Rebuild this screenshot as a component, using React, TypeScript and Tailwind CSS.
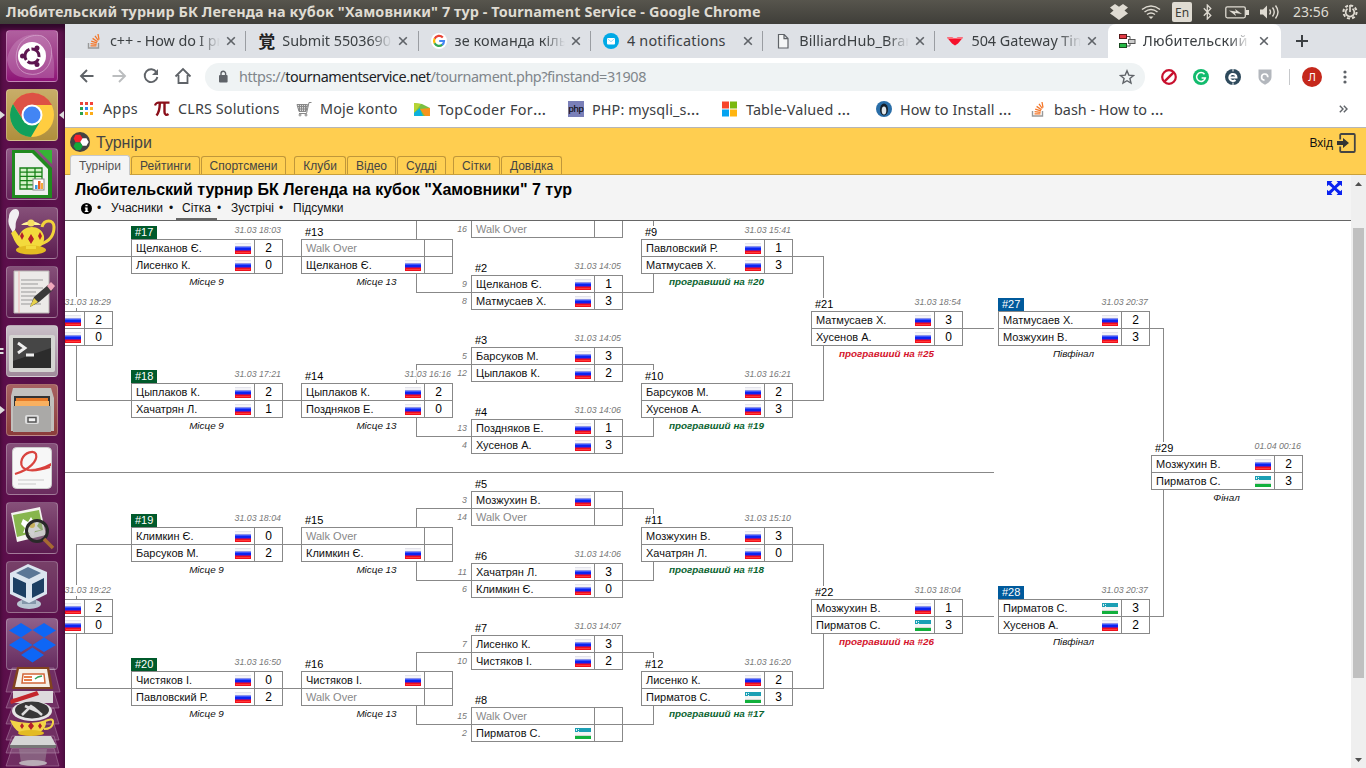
import type { ReactNode } from 'react';

type Flag = 'ru' | 'uz' | '';
type Player = [name: string, flag: Flag, score: string];
type Match = {
  x: number;
  y: number;
  id: string;
  date?: string;
  tone?: 'green' | 'blue';
  note?: string;
  noteTone?: 'green' | 'red';
  seeds?: [string, string];
  a: Player;
  b: Player;
};

const WO: Player = ['Walk Over', '', ''];

/* Node coordinates are relative to the canvas corner. */
const matches: Match[] = [
  { x: -104, y: 90, id: '', date: '31.03 18:29', a: ['', 'ru', '2'], b: ['', 'ru', '0'] },
  { x: -104, y: 378, id: '', date: '31.03 19:22', a: ['', 'ru', '2'], b: ['', 'ru', '0'] },
  { x: 66, y: 18, id: '#17', date: '31.03 18:03', tone: 'green', note: 'Місце 9', a: ['Щелканов Є.', 'ru', '2'], b: ['Лисенко К.', 'ru', '0'] },
  { x: 66, y: 162, id: '#18', date: '31.03 17:21', tone: 'green', note: 'Місце 9', a: ['Цыплаков К.', 'ru', '2'], b: ['Хачатрян Л.', 'ru', '1'] },
  { x: 66, y: 306, id: '#19', date: '31.03 18:04', tone: 'green', note: 'Місце 9', a: ['Климкин Є.', 'ru', '0'], b: ['Барсуков М.', 'ru', '2'] },
  { x: 66, y: 450, id: '#20', date: '31.03 16:50', tone: 'green', note: 'Місце 9', a: ['Чистяков І.', 'ru', '0'], b: ['Павловский Р.', 'ru', '2'] },
  { x: 236, y: 18, id: '#13', note: 'Місце 13', a: WO, b: ['Щелканов Є.', 'ru', ''] },
  { x: 236, y: 162, id: '#14', date: '31.03 16:16', note: 'Місце 13', a: ['Цыплаков К.', 'ru', '2'], b: ['Поздняков Е.', 'ru', '0'] },
  { x: 236, y: 306, id: '#15', note: 'Місце 13', a: WO, b: ['Климкин Є.', 'ru', ''] },
  { x: 236, y: 450, id: '#16', note: 'Місце 13', a: ['Чистяков І.', 'ru', ''], b: WO },
  { x: 406, y: -18, id: '', seeds: ['', '16'], a: ['', '', ''], b: WO },
  { x: 406, y: 54, id: '#2', date: '31.03 14:05', seeds: ['9', '8'], a: ['Щелканов Є.', 'ru', '1'], b: ['Матмусаев Х.', 'ru', '3'] },
  { x: 406, y: 126, id: '#3', date: '31.03 14:05', seeds: ['5', '12'], a: ['Барсуков М.', 'ru', '3'], b: ['Цыплаков К.', 'ru', '2'] },
  { x: 406, y: 198, id: '#4', date: '31.03 14:06', seeds: ['13', '4'], a: ['Поздняков Е.', 'ru', '1'], b: ['Хусенов А.', 'ru', '3'] },
  { x: 406, y: 270, id: '#5', seeds: ['3', '14'], a: ['Мозжухин В.', 'ru', ''], b: WO },
  { x: 406, y: 342, id: '#6', date: '31.03 14:06', seeds: ['11', '6'], a: ['Хачатрян Л.', 'ru', '3'], b: ['Климкин Є.', 'ru', '0'] },
  { x: 406, y: 414, id: '#7', date: '31.03 14:07', seeds: ['7', '10'], a: ['Лисенко К.', 'ru', '3'], b: ['Чистяков І.', 'ru', '2'] },
  { x: 406, y: 486, id: '#8', seeds: ['15', '2'], a: WO, b: ['Пирматов С.', 'uz', ''] },
  { x: 576, y: 18, id: '#9', date: '31.03 15:41', note: 'програвший на #20', noteTone: 'green', a: ['Павловский Р.', 'ru', '1'], b: ['Матмусаев Х.', 'ru', '3'] },
  { x: 576, y: 162, id: '#10', date: '31.03 16:21', note: 'програвший на #19', noteTone: 'green', a: ['Барсуков М.', 'ru', '2'], b: ['Хусенов А.', 'ru', '3'] },
  { x: 576, y: 306, id: '#11', date: '31.03 15:10', note: 'програвший на #18', noteTone: 'green', a: ['Мозжухин В.', 'ru', '3'], b: ['Хачатрян Л.', 'ru', '0'] },
  { x: 576, y: 450, id: '#12', date: '31.03 16:20', note: 'програвший на #17', noteTone: 'green', a: ['Лисенко К.', 'ru', '2'], b: ['Пирматов С.', 'uz', '3'] },
  { x: 746, y: 90, id: '#21', date: '31.03 18:54', note: 'програвший на #25', noteTone: 'red', a: ['Матмусаев Х.', 'ru', '3'], b: ['Хусенов А.', 'ru', '0'] },
  { x: 746, y: 378, id: '#22', date: '31.03 18:04', note: 'програвший на #26', noteTone: 'red', a: ['Мозжухин В.', 'ru', '1'], b: ['Пирматов С.', 'uz', '3'] },
  { x: 933, y: 90, id: '#27', date: '31.03 20:37', tone: 'blue', note: 'Півфінал', a: ['Матмусаев Х.', 'ru', '2'], b: ['Мозжухин В.', 'ru', '3'] },
  { x: 933, y: 378, id: '#28', date: '31.03 20:37', tone: 'blue', note: 'Півфінал', a: ['Пирматов С.', 'uz', '3'], b: ['Хусенов А.', 'ru', '2'] },
  { x: 1086, y: 234, id: '#29', date: '01.04 00:16', note: 'Фінал', a: ['Мозжухин В.', 'ru', '2'], b: ['Пирматов С.', 'uz', '3'] },
];

function FlagIcon({ kind }: { kind: Flag }) {
  if (kind === 'ru')
    return (
      <svg width="16" height="11" viewBox="0 0 16 11" shapeRendering="crispEdges" className="block shrink-0">
        <rect width="16" height="4" fill="#f3f3f8" />
        <rect width="16" height="1" fill="#e4e4ec" />
        <rect y="3" width="16" height="5" fill="#0c24f0" />
        <rect y="3" width="16" height="1" fill="#8c93ea" />
        <rect y="4" width="16" height="1" fill="#3b55ff" />
        <rect y="7" width="16" height="4" fill="#f0101c" />
        <rect y="7" width="16" height="1" fill="#8a1090" />
        <rect x="1" y="9" width="14" height="1" fill="#ff3a3a" />
      </svg>
    );
  if (kind === 'uz')
    return (
      <svg width="16" height="11" viewBox="0 0 16 11" shapeRendering="crispEdges" className="block shrink-0">
        <rect width="16" height="11" fill="#f4f4f4" />
        <rect width="16" height="4" fill="#1b9fb4" />
        <rect x="1" y="1" width="1" height="2" fill="#d9f0f4" />
        <rect x="3" y="1" width="1" height="1" fill="#d9f0f4" />
        <rect x="3" y="3" width="1" height="1" fill="#d9f0f4" />
        <rect y="8" width="16" height="3" fill="#11b03c" />
        <rect y="7" width="16" height="1" fill="#d5d9d5" />
      </svg>
    );
  return null;
}

function PlayerRow({ p, last }: { p: Player; last?: boolean }) {
  return (
    <div className={last ? 'flex h-4' : 'flex h-[17px] border-b border-[#888]'}>
      <div className="flex w-[123px] items-center justify-between border-r border-[#888] pl-1 pr-[3px]">
        <span className={p[0] === 'Walk Over' ? 'text-[#888]' : 'text-[#111]'}>{p[0]}</span>
        <span className="pt-px"><FlagIcon kind={p[1]} /></span>
      </div>
      <div className="flex flex-1 items-center justify-center text-[12px]">{p[2]}</div>
    </div>
  );
}

function MatchNode({ m }: { m: Match }) {
  const tone =
    m.tone === 'green' ? 'bg-[#005a2b] text-white' : m.tone === 'blue' ? 'bg-[#005a9c] text-white' : 'bg-white';
  const note =
    m.noteTone === 'green' ? 'font-bold text-[#0a6430]' : m.noteTone === 'red' ? 'font-bold text-[#d4142c]' : 'text-[#111]';
  return (
    <div className="absolute w-[152px] whitespace-nowrap text-[11px] leading-[12px]" style={{ left: m.x, top: m.y - 13 }}>
      <div className="flex h-[13px] items-start justify-between">
        <div className={`h-[13px] px-1 ${tone}`}>{m.id}</div>
        {m.date && (
          <div className="h-[10px] bg-white/80 pr-[2px] text-[8.8px] italic leading-[9px] text-[#777]">{m.date}</div>
        )}
      </div>
      <div className="h-[35px] border border-[#888] bg-white">
        <PlayerRow p={m.a} />
        <PlayerRow p={m.b} last />
      </div>
      <div className={`pr-px pt-px text-center text-[9.9px] italic leading-[13px] ${note}`}>{m.note}</div>
      {m.seeds && (
        <div className="absolute right-[156px] top-[14px] text-right text-[8.8px] italic leading-[17px] text-[#777]">
          <div className="h-[17px]">{m.seeds[0]}</div>
          <div className="h-[17px]">{m.seeds[1]}</div>
        </div>
      )}
    </div>
  );
}

const connectors = [
  'M66 35.5H11.5V76M11.5 87V90M11.5 125V179.5H66',
  'M66 323.5H11.5V364M11.5 375V378M11.5 413V467.5H66',
  'M218 35.5H236M218 179.5H236M218 323.5H236M218 467.5H236',
  'M351.5 0V18M351.5 53V71.5H406',
  'M406 143.5H351.5V162M351.5 197V215.5H406',
  'M406 287.5H351.5V306M351.5 341V359.5H406',
  'M406 431.5H351.5V450M351.5 485V503.5H406',
  'M588.5 0V5M558 71.5H588.5V53',
  'M558 143.5H588.5V149M558 215.5H588.5V197',
  'M558 287.5H588.5V293M558 359.5H588.5V341',
  'M558 431.5H588.5V437M558 503.5H588.5V485',
  'M728 35.5H758.5V77M728 179.5H758.5V125',
  'M728 323.5H758.5V365M728 467.5H758.5V413',
  'M898 107.5H929M898 395.5H929M0 251.5H929',
  'M1085 107.5H1098.5V221M1085 395.5H1098.5V269',
];

function StackIcon() {
  return (
    <svg width="16" height="16" viewBox="0 0 16 16" fill="none">
      <path d="M2.5 10v5h10v-5" stroke="#999" strokeWidth="1.4" />
      <path d="M4.5 12.8h6M4.6 10.6l6 .7M5.2 8.1l5.7 1.8M6.6 5.4l4.9 3.3M9 2.8l3.3 4.7M12 1l1 5.6" stroke="#f4772a" strokeWidth="1.3" />
    </svg>
  );
}

function GoogleG() {
  return (
    <svg width="16" height="16" viewBox="0 0 16 16" fill="none">
      <circle cx="8" cy="8" r="8" fill="#fff" />
      <path d="M11.8 4.4A5 5 0 0 0 3.6 5.8" stroke="#ea4335" strokeWidth="2.2" />
      <path d="M3.7 5.6a5 5 0 0 0 0 4.8" stroke="#fbbc05" strokeWidth="2.2" />
      <path d="M3.6 10.3a5 5 0 0 0 7.7 1.4" stroke="#34a853" strokeWidth="2.2" />
      <path d="M8.2 8h4.8a5 5 0 0 1-1.8 3.8" stroke="#4285f4" strokeWidth="2.2" />
    </svg>
  );
}

const tabs: { title: string; icon: ReactNode; track: string }[] = [
  { title: 'c++ - How do I print', track: 'tracking-[-0.12px]', icon: <StackIcon /> },
  { title: 'Submit 5503690 -', track: 'tracking-[-0.05px]', icon: <span className="font-['Noto_Sans_CJK_JP',sans-serif] text-[17px] font-bold leading-4 text-[#222]">覚</span> },
  { title: 'зе команда кільк', track: 'tracking-[0.1px]', icon: <GoogleG /> },
  {
    title: '4 notifications', track: 'tracking-[0.22px]',
    icon: (
      <svg width="16" height="16" viewBox="0 0 16 16"><circle cx="8" cy="8" r="8" fill="#00a9e6" /><rect x="4" y="5" width="8" height="6.5" rx="1" fill="#fff" /><path d="M4.3 5.5 8 8.7l3.7-3.2" fill="none" stroke="#9bdcf5" /></svg>
    ),
  },
  {
    title: 'BilliardHub_Brand', track: 'tracking-[0.1px]',
    icon: (
      <svg width="16" height="16" viewBox="0 0 16 16"><path d="M3.5 1.5h5.7l3.8 4v9.5H3.5zM9 1.7v4h3.9" fill="#f4f5f6" stroke="#5f6368" strokeWidth="1.2" /></svg>
    ),
  },
  {
    title: '504 Gateway Time', track: 'tracking-[-0.05px]',
    icon: (
      <svg width="16" height="16" viewBox="0 0 16 16"><path d="M0 4.5h5l3 1 3-1h5l-5 6-3 2-3-2z" fill="#f5112b" /><path d="M0 4.5h5l3 1 3-1h5l-1.2 1.6H1.2z" fill="#ff6d78" /></svg>
    ),
  },
];

function CloseX() {
  return (
    <svg width="10" height="10" viewBox="0 0 10 10"><path d="M1.2 1.2l7.6 7.6M8.8 1.2 1.2 8.8" stroke="#5f6368" strokeWidth="1.6" /></svg>
  );
}

const fade = '[mask-image:linear-gradient(to_right,#000_80%,transparent)]';

function TabStrip() {
  return (
    <div className="flex h-[34px] bg-[#dee1e6] pl-[9px] text-[14.4px] text-[#3c4043]">
      {tabs.map((t, i) => (
        <div key={t.title} className="flex w-[172.3px] shrink-0 items-center pl-3">
          <div className="flex h-4 w-4 items-center">{t.icon}</div>
          <div className={`ml-2 w-[110px] overflow-hidden whitespace-nowrap ${t.track} ${i === 3 ? '' : fade}`}>{t.title}</div>
          <div className="ml-[6px]"><CloseX /></div>
          {i < 5 && <div className="ml-auto h-5 w-px bg-[#9a9da2]" />}
        </div>
      ))}
      <div className="flex w-[173px] shrink-0 items-center rounded-t-lg bg-white pl-[11px]">
        <svg width="17" height="16" viewBox="0 0 17 16" fill="none">
          <path d="M8 3.5h3v4M8 13h3V9" stroke="#555" />
          <rect x=".5" y="1.5" width="7" height="4" fill="#e23a45" stroke="#5a1a1a" />
          <rect x=".5" y="10.5" width="7" height="4" fill="#25b945" stroke="#1a4a20" />
          <rect x="9.5" y="6.5" width="6.5" height="4" fill="#ccc" stroke="#555" />
        </svg>
        <div className={`ml-[7px] w-[107px] overflow-hidden whitespace-nowrap tracking-[0.2px] ${fade}`}>Любительский турнир</div>
        <div className="ml-[9px]"><CloseX /></div>
      </div>
      <div className="flex items-center pl-[15px]">
        <svg width="12" height="12" viewBox="0 0 12 12"><path d="M6 0v12M0 6h12" stroke="#3c4043" strokeWidth="2" /></svg>
      </div>
    </div>
  );
}

function Toolbar() {
  return (
    <div className="flex h-[37px] items-center bg-white pl-3">
      {[
        <path key="b" d="M16.5 10h-12M10 4l-6 6 6 6" />,
        <path key="f" d="M3.5 10h12M10 4l6 6-6 6" stroke="#bbbdbf" />,
        <g key="r"><path d="M15.5 6.2A6.4 6.4 0 1 0 16.4 11" /><path d="M17 3v6h-6l2.3-2.2z" fill="#5f6368" stroke="none" /></g>,
        <path key="h" d="M2.5 10.500 10 3l7.500 7.500M5.500 9v8h9V9" strokeWidth="1.800" />,
      ].map((d, i) => (
        <div key={i} className="flex w-8 justify-start pb-px">
          <svg width="20" height="20" viewBox="0 0 20 20" fill="none" stroke="#5f6368" strokeWidth="1.9">{d}</svg>
        </div>
      ))}
      <div className="flex h-7 w-[940px] items-center rounded-full bg-[#eff3f4] pl-[13px] pr-[10px]">
        <svg width="10" height="14" viewBox="0 0 10 14"><rect x="1" y="5" width="8.6" height="7.5" rx="1" fill="#5f6368" /><path d="M3 5V3.6a2.3 2.3 0 0 1 4.6 0V5" fill="none" stroke="#5f6368" strokeWidth="1.4" /></svg>
        <div className="ml-[11px] text-[14.4px] tracking-[-0.43px] text-[#80868b]">
          https://<span className="text-[#202124]">tournamentservice.net</span>/tournament.php?finstand=31908
        </div>
        <svg className="ml-auto" width="16" height="16" viewBox="0 0 16 16"><path d="M8 1.8l1.8 4.3 4.7.4-3.6 3 1.1 4.6L8 11.7l-4 2.4 1.1-4.6-3.6-3 4.7-.4z" fill="none" stroke="#5f6368" strokeWidth="1.4" /></svg>
      </div>
      <div className="ml-4 flex items-center gap-4">
        <svg width="16" height="16" viewBox="0 0 16 16"><circle cx="8" cy="8" r="6.8" fill="#fff" stroke="#c8102e" strokeWidth="2.2" /><path d="M3.6 12.4l8.8-8.8" stroke="#c8102e" strokeWidth="2.4" /></svg>
        <svg width="16" height="16" viewBox="0 0 16 16"><circle cx="8" cy="8" r="8" fill="#12bb6d" /><path d="M11.5 5.3A4.4 4.4 0 1 0 12.3 9H8.6" fill="none" stroke="#fff" strokeWidth="1.5" /></svg>
        <svg width="16" height="16" viewBox="0 0 16 16"><circle cx="8" cy="8" r="8" fill="#2e4a5c" /><path d="M4.5 8.5h7A3.6 3.6 0 1 0 10.5 11" fill="none" stroke="#fff" strokeWidth="2" /><path d="M8 0v2.5M8 13.5V16" stroke="#fff" /></svg>
        <svg width="16" height="16" viewBox="0 0 16 16"><path d="M1.500 .5h13v7.500c0 3.500-3 6-6.500 7.800C4.500 14 1.500 11.500 1.500 8z" fill="#b3b7bd" /><path d="M10.800 8.300a3.100 3.100 0 1 0-3.300 2.900" fill="none" stroke="#fff" strokeWidth="1.700" /></svg>
      </div>
      <div className="ml-4 h-[16px] w-px bg-[#c6c8cb]" />
      <div className="ml-3 flex h-5 w-5 items-center justify-center rounded-full bg-[#c5281c] text-[11px] leading-none text-white">Л</div>
      <svg className="ml-[21px]" width="4" height="14" viewBox="0 0 4 14"><circle cx="2" cy="2" r="1.600" fill="#5f6368" /><circle cx="2" cy="7" r="1.600" fill="#5f6368" /><circle cx="2" cy="12" r="1.600" fill="#5f6368" /></svg>
    </div>
  );
}

function Label({ text, track, cut }: { text: string; track: string; cut?: boolean }) {
  return (
    <span className={`whitespace-pre leading-4 ${track}`}>
      {text}
      {cut && <span className="text-[16.5px] leading-none">…</span>}
    </span>
  );
}

function Bookmarks() {
  return (
    <div className="flex h-[33px] items-center border-b border-[#b6b6b6] bg-white pb-[4px] pl-[14px] text-[14.4px] text-[#3c4043]">
      <div className="flex w-[75px] items-center gap-2">
        <svg width="16" height="16" viewBox="0 0 16 16">
          {['#e8453c', '#e8453c', '#f5423a', '#2ba24c', '#2f86f2', '#f9bb2d', '#2ba24c', '#fbab18', '#fbab18'].map((c, i) => (
            <rect key={i} x={1 + (i % 3) * 5} y={1 + Math.floor(i / 3) * 5} width="3" height="3" fill={c} />
          ))}
        </svg>
        <Label text="Apps" track="tracking-[0.3px]" />
      </div>
      <div className="flex w-[142px] items-center gap-2">
        <svg width="16" height="16" viewBox="0 0 16 16"><path d="M1 4.500C2 1.500 3 1.600 5 1.600h10.500" stroke="#8b0f1a" strokeWidth="2.200" fill="none" /><path d="M5.800 2c0 5-.5 9-3.300 12.500M10.500 2v9c0 3 2 3.500 4 2" stroke="#8b0f1a" strokeWidth="2.400" fill="none" /></svg>
        <Label text="CLRS Solutions" track="tracking-[0.12px]" />
      </div>
      <div className="flex w-[118px] items-center gap-2">
        <svg width="16" height="16" viewBox="0 0 16 16" fill="none" stroke="#888"><path d="M1 3.500h10.500l-1.500 7H3z" fill="#ddd" /><path d="M3.500 3.500v7M5.500 3.500v7M7.500 3.500v7M9.500 3.500v7M1.500 5.500h10M2 8h9M15.500 1.500h-2.500l-2.500 11H3" /><circle cx="4" cy="14" r="1" /><circle cx="10" cy="14" r="1" /></svg>
        <Label text="Moje konto" track="tracking-[0.1px]" />
      </div>
      <div className="flex w-[154px] items-center gap-2">
        <svg width="16" height="16" viewBox="0 0 16 16"><path d="M0 2l8 1 8 4v8H0z" fill="#7ac043" /><path d="M0 2l7 1-7 9z" fill="#b7d433" /><path d="M0 15l6-7 3 7z" fill="#0bb0e0" /><path d="M6 8l10-1v8h-5z" fill="#f7941e" /><path d="M0 12l6-5v2l-6 6z" fill="#0bb0e0" /></svg>
        <Label text="TopCoder For" track="tracking-[0.32px]" cut />
      </div>
      <div className="flex w-[153px] items-center gap-2">
        <span className="flex h-4 w-4 items-center justify-center bg-[#7a7fb8] font-['Liberation_Sans',sans-serif] text-[9.500px] leading-none tracking-[-0.3px] text-black">php</span>
        <Label text="PHP: mysqli_s" track="tracking-[0.12px]" cut />
      </div>
      <div className="flex w-[155px] items-center gap-[9px]">
        <svg width="16" height="16" viewBox="0 0 16 16"><path d="M1 .5h7v7H1z" fill="#f8452b" /><path d="M9 .5h7v7H9z" fill="#7ab80e" /><path d="M1 8.500h7v7H1z" fill="#05a3f0" /><path d="M9 8.500h7v7H9z" fill="#ffb511" /></svg>
        <Label text="Table-Valued " track="tracking-[0.1px]" cut />
      </div>
      <div className="flex w-[154px] items-center gap-2">
        <svg width="16" height="16" viewBox="0 0 16 16"><circle cx="8" cy="8" r="8" fill="#2a6ea8" /><ellipse cx="8" cy="8.500" rx="4" ry="6" fill="#15202b" /><ellipse cx="8" cy="9.500" rx="2.300" ry="4" fill="#dfe6ea" /></svg>
        <Label text="How to Install " track="tracking-[0.1px]" cut />
      </div>
      <div className="flex w-[309px] items-center gap-2">
        <StackIcon />
        <Label text="bash - How to " track="tracking-[0px]" cut />
      </div>
      <svg width="9" height="8" viewBox="0 0 9 8"><path d="M.8.8 4 4 .8 7.200M4.800.8 8 4 4.800 7.200" fill="none" stroke="#5f6368" strokeWidth="1.400" /></svg>
    </div>
  );
}

const navTab = 'h-[18px] rounded-t-[3px] border border-b-0 border-[#c0973a] bg-[#ffd052] text-center leading-[18px] text-[#444]';

function SiteHeader() {
  return (
    <div className="flex h-[47px] shrink-0 flex-col justify-between border-b border-[#c9a03a] bg-[#ffce50] text-[12px]">
      <div className="flex items-center pl-[5px] pr-[10px] pt-[3px]">
        <svg width="20" height="22" viewBox="0 0 20 22"><circle cx="10" cy="11" r="10" fill="#434343" /><path d="M5.500 3.800h4.800l2.400 3.800-2.400 3.600H5.500L3.700 7.500z" fill="#f8222c" /><path d="M12.500 7.200h4l2.200 3.800-2.200 3.800h-4L10.200 11z" fill="#fff" /><path d="M5.500 11.500h4.800l2.400 3.800-2.400 3.600H6l-2.500-3.600z" fill="#12a83a" /></svg>
        <span className="ml-[6px] text-[16px] leading-[21px] text-[#444]">Турніри</span>
        <span className="ml-auto pt-[2px] text-[#111]">Вхід</span>
        <svg className="ml-1 mt-px" width="19" height="20" viewBox="0 0 19 20"><path d="M3.200 6.500V2a1 1 0 0 1 1-1h12.600a1 1 0 0 1 1 1v16a1 1 0 0 1-1 1H4.200a1 1 0 0 1-1-1v-4.500" fill="none" stroke="#444" strokeWidth="1.800" /><path d="M0 8h6V5l6 5-6 5v-3H0z" fill="#333" /></svg>
      </div>
      <div className="flex items-end pl-[5px]">
        <div className="relative -mb-px h-5 w-[60px] rounded-t-[3px] border border-b-0 border-[#c8c8c8] bg-[#f4f4f4] text-center leading-[20px] text-[#555]">Турніри</div>
        <div className={`ml-px w-[69px] ${navTab}`}>Рейтинги</div>
        <div className={`ml-px w-[85px] ${navTab}`}>Спортсмени</div>
        <div className={`ml-2 w-[52px] ${navTab}`}>Клуби</div>
        <div className={`ml-px w-[49px] ${navTab}`}>Відео</div>
        <div className={`ml-px w-[49px] ${navTab}`}>Судді</div>
        <div className={`ml-[7px] w-[47px] ${navTab}`}>Сітки</div>
        <div className={`ml-px w-[61px] ${navTab}`}>Довідка</div>
      </div>
    </div>
  );
}

function TournamentHeader() {
  return (
    <div className="flex h-[46px] shrink-0 border-b border-[#666] bg-[#f4f4f4] pl-[10px] text-black">
      <div className="flex flex-1 flex-col">
        <h1 className="pt-[5px] text-[16px] font-bold leading-[19px]">Любительский турнир БК Легенда на кубок "Хамовники" 7 тур</h1>
        <div className="flex flex-1 items-stretch pl-[6px] text-[12px] leading-[19px] text-[#111]">
          <svg className="mt-[4px]" width="11" height="11" viewBox="0 0 10 10"><circle cx="5" cy="5" r="5" fill="#000" /><path d="M4 1.500h2v1.500H4zM3.500 4H6v3.200h.7v1H3.400v-1H4V5h-.5z" fill="#fff" /></svg>
          <span className="ml-[5px] w-[14px]">•</span>
          <span className="w-[58px]">Учасники</span>
          <span className="w-[7px]">•</span>
          <span className="w-[35px] border-b-[3px] border-[#666] pl-[6px] box-content">Сітка</span>
          <span className="w-[14px] ">•</span>
          <span className="w-[48px]">Зустрічі</span>
          <span className="w-[14px]">•</span>
          <span>Підсумки</span>
        </div>
      </div>
      <svg className="mr-[9px] mt-[6px]" width="15" height="14" viewBox="0 0 15 14"><path d="M0 0h5.500L4 1.600 7.500 5 11 1.600 9.500 0H15v5.300L13.300 3.700 9.500 7l3.800 3.300L15 8.700V14H9.500L11 12.400 7.500 9 4 12.400 5.500 14H0V8.700l1.700 1.600L5.500 7 1.700 3.700 0 5.300z" fill="#0a22f0" /></svg>
    </div>
  );
}

function Page() {
  return (
    <div className="flex min-h-0 flex-1 flex-col bg-white font-['Liberation_Sans',Arial,sans-serif]">
      <SiteHeader />
      <div className="flex min-h-0 flex-1">
        <div className="flex min-w-0 flex-1 flex-col">
          <TournamentHeader />
          <div className="relative flex-1 overflow-hidden bg-white">
            <svg width="1286" height="547" className="absolute left-0 top-0" shapeRendering="crispEdges">
              {connectors.map((d) => <path key={d} d={d} fill="none" stroke="#888" />)}
            </svg>
            {matches.map((m) => <MatchNode key={`${m.x},${m.y}`} m={m} />)}
          </div>
        </div>
        <div className="flex w-[15px] flex-col items-center bg-[#efefef] pb-[6px] pt-[7px]">
          <svg width="7" height="4" viewBox="0 0 7 4"><path d="M0 4 3.500 0 7 4z" fill="#505050" /></svg>
          <div className="mt-[42px] h-[450px] w-[11px] bg-[#c0c0c0]" />
          <svg className="mt-auto" width="7" height="4" viewBox="0 0 7 4"><path d="M0 0 3.500 4 7 0z" fill="#505050" /></svg>
        </div>
      </div>
    </div>
  );
}

const launcher: { bg: string; art: ReactNode }[] = [
  {
    bg: 'from-[#b0609f] to-[#8e1277]',
    art: <><path d="M1 30C4 12 18 2 34 5c8 2 12 10 11 20C44 40 34 48 22 44 10 42 6 30 12 18L26 8c18 0 24 14 22 40H20C6 46 3 40 1 30z" fill="#d59fca" fillOpacity=".35" /><path d="M12 18C16 6 30 4 36 6c8 4 11 12 9 22-2 12-12 18-22 16C10 42 8 28 12 18z" fill="none" stroke="#d9a9d0" strokeOpacity=".7" /><circle cx="26" cy="26" r="14" fill="#fff" /><circle cx="26" cy="26" r="7" fill="none" stroke="#5d1550" strokeWidth="3" strokeDasharray="12.600 2" strokeDashoffset="-3" /><circle cx="16.500" cy="26" r="2.500" fill="#5d1550" /><circle cx="31" cy="18" r="2.500" fill="#5d1550" /><circle cx="31" cy="34.500" r="2.500" fill="#5d1550" /></>,
  },
  {
    bg: 'from-[#c8ad68] to-[#b08f3c]',
    art: <><circle cx="26" cy="26" r="22" fill="#ffcd40" /><path d="M26 16h20A22 22 0 0 0 7 15l10 16z" fill="#dd5144" /><path d="M7 15A22 22 0 0 0 25 48l10-17-9 5-9-5z" fill="#12a05c" /><circle cx="26" cy="26" r="10.500" fill="#fff" /><circle cx="26" cy="26" r="8.500" fill="#4285f4" /></>,
  },
  {
    bg: 'from-[#8f5785] to-[#652459]',
    art: <><path d="M6 2h22l18 18v30H6z" fill="#208a1f" /><path d="M9 5h17l16 16v26H9z" fill="#eef0ee" /><path d="M32 2h14v14z" fill="#36b336" /><path d="M14 20h22v21H14z" fill="#d4f2c8" /><path d="M14 20h22v21H14zM14 24.200h22M14 28.400h22M14 32.600h22M14 36.800h22M21 20v21M29 20v21" fill="none" stroke="#168016" strokeWidth="1.300" /><rect x="27" y="31" width="11" height="11" fill="#fff" stroke="#888" /><path d="M29 37h2.500v4H29z" fill="#3a9bdc" /><path d="M32 33h2.500v8H32z" fill="#ea6324" /><path d="M35 35h2v6h-2z" fill="#f3a93a" /></>,
  },
  {
    bg: 'from-[#865079] to-[#5c1c50]',
    art: <><path d="M7 26C4 20 1 17 3 10c0-6 6-10 9-7 3 4-1 8-2 12s1 6-3 11z" fill="#f2eff2" /><path d="M36 20c2-8 12-8 12 0 0 8-4 14-13 17" fill="none" stroke="#f2d33a" strokeWidth="3" /><path d="M5 26l4-3 4 6c4-12 22-12 25 0 1 8-4 12-8 13H18C10 40 8 32 5 26z" fill="#f3da3c" /><path d="M15 18c6-5 14-5 20 0z" fill="#fff29b" /><circle cx="25" cy="16" r="3.500" fill="#f6e063" /><ellipse cx="25" cy="43" rx="15" ry="4.500" fill="#e3bb22" /><path d="M20 39h10v3H20z" fill="#f3da3c" /><path d="M25 27l3 5-3 5-3-5zM16 25l2 4-2 4-2-4zM34 25l2 4-2 4-2-4z" fill="#b5202b" /></>,
  },
  {
    bg: 'from-[#865079] to-[#5c1c50]',
    art: <><path d="M8 5h35v42H8z" fill="#eceae8" stroke="#b9b5b3" /><path d="M13 5v42" stroke="#eeb2b2" /><path d="M15 14h22M15 18h17M15 22h22M15 26h15M15 30h18M15 34h14M15 38h20" stroke="#999" /><path d="M24 41l4-10 14-12 5 5-14 12z" fill="#3a3a3a" /><path d="M24 41l4-9 4 4z" fill="#e8d24c" /><path d="M41 20l4-4 4 4-4 5z" fill="#f0a8bc" /></>,
  },
  {
    bg: 'from-[#c9bfc7] to-[#a08a9b]',
    art: <><rect x="3" y="10" width="46" height="37" rx="2" fill="#d5d5d2" /><rect x="7" y="13" width="38" height="30" fill="#2c2c2c" /><path d="M7 13h38v10L7 36z" fill="#464646" /><path d="M12 18l7 5-7 5M20 30h8" stroke="#eee" strokeWidth="2.800" fill="none" /></>,
  },
  {
    bg: 'from-[#a76262] to-[#8b3c3b]',
    art: <><path d="M7 4h38l3 10v33H5V12z" fill="#c2c0bd" /><path d="M8 12h36v12H8z" fill="#333" /><path d="M10 14h32v10H10z" fill="#e87b28" /><path d="M9 17h34v7H9z" fill="#f8b060" /><path d="M7 22h38v26H7z" fill="#aaa9a7" /><rect x="19" y="31" width="14" height="9" rx="2" fill="#ddd" /><rect x="22" y="33.500" width="8" height="4.500" fill="#f4f4f4" stroke="#555" strokeWidth="1.500" /></>,
  },
  {
    bg: 'from-[#865079] to-[#6b2c5f]',
    art: <><rect x="6.500" y="4.500" width="39" height="41" rx="4" fill="#f7f7f7" stroke="#ccc" /><path d="M9 31c14-4 23-13 21-20-2-4-11-2-14 5-3 8 2 16 28 8" fill="none" stroke="#d9443f" strokeWidth="2.200" /><path d="M24 26q10 0 21-6v3q-10 5-21 3z" fill="#d83f3c" /><path d="M12 37h26M12 41h18" stroke="#c9c9c9" /></>,
  },
  {
    bg: 'from-[#865079] to-[#5c1c50]',
    art: <><path d="M5 11 34 5l6 28-29 7z" fill="#f4f4f0" /><path d="M7 13l26-5 4 20-26 7z" fill="#87b64d" /><path d="M17 17l5 3 3-5 3 5 6-1-3 5 4 4-6 1-2 5-5-4-5 1 2-5-4-4z" fill="#fff" /><circle cx="26" cy="23" r="3" fill="#eec42c" /><circle cx="31" cy="29" r="10.500" fill="#999" fillOpacity=".45" stroke="#292929" strokeWidth="3" /><path d="M38 37l9 9" stroke="#a76a32" strokeWidth="3.500" /></>,
  },
  {
    bg: 'from-[#774068] to-[#652459]',
    art: <><ellipse cx="23" cy="43" rx="12" ry="5" fill="#b9c6d3" /><path d="M16 34h14v9H16z" fill="#8497aa" /><path d="M22 3l19 8v22l-18 9-19-9V12z" fill="#dbe5ef" /><path d="M7 16l13 6v15L7 31zM26 23l12-6v14l-12 6z" fill="#1c3f63" /><path d="M22 6l13 6-12 6-13-6z" fill="#5b7796" /></>,
  },
  {
    bg: 'from-[#90608a] to-[#652a5e]',
    art: <path d="M15 5l11.500 7-11.500 7.500L3 12.500zM38 5 26.500 12l11.500 7.500L50 12.500zM3 27l12-7.500L26.500 27 15 34zM50 27l-12-7.500L26.500 27 38 34zM26.500 29.500 38 37l-11.500 7.500L15 37z" fill="#0e66f5" />,
  },
];

function Launcher() {
  return (
    <div className="flex w-[65px] shrink-0 flex-col items-start gap-[7px] overflow-hidden bg-linear-to-r from-[#5d0f4c] via-[#570f48] to-[#5e124e] pt-[6px] shadow-[inset_0_5px_5px_#30082a]">
      {launcher.map((l, i) => (
        <div key={i} className={`flex h-[52px] shrink-0 items-center gap-px ${i === 10 ? '-mt-[2px]' : ''}`}>
          <div className="flex w-[5px] items-center">
            {(i === 1 || i === 6) && <svg width="5" height="8" viewBox="0 0 5 8"><path d="M0 0v8l5-4z" fill="#ddd" /></svg>}
            {i === 5 && <svg width="5" height="8" viewBox="0 0 5 8"><path d="M0 1h3l1 1-1 1H0zM0 5h3l1 1-1 1H0z" fill="#ddd" /></svg>}
          </div>
          <div className={`h-[52px] w-[52px] overflow-hidden rounded-[4px] border border-white/25 bg-linear-to-b ${l.bg}`}>
            <svg width="50" height="50" viewBox="1 1 50 50">{l.art}</svg>
          </div>
          {i === 1 && <svg width="5" height="8" viewBox="0 0 5 8"><path d="M5 0v8L0 4z" fill="#ddd" /></svg>}
        </div>
      ))}
      <svg className="-mt-[11px] ml-[5px] shrink-0" width="56" height="104" viewBox="0 0 56 104">
        <g fill="#ffffff" fillOpacity=".13" stroke="#b58bad" strokeOpacity=".5">
          <path d="M7 2h42l6 24H1zM7 26h42l5 16H1zM7 42h42l5 16H1zM7 58h42l5 16H1zM7 70h42l5 17H1z" />
          <path d="M7 82h42l5 18H1z" />
        </g>
        <path d="M12 1h32l4 22H7z" fill="#82431f" />
        <path d="M14 3h28l3 18H10z" fill="#f6efe6" />
        <path d="M18 8h21l1 9H17z" fill="#fff" stroke="#d1673a" strokeWidth="1.500" />
        <path d="M19 10h8v2h-8zM19 13h8v2h-8z" fill="#e57b47" />
        <path d="M30 13l3-2 4-1" stroke="#33a157" strokeWidth="1.500" fill="none" />
        <path d="M8 25h40v12H8z" fill="#ddd9dc" />
        <path d="M6 38q-3-5 5-6l21-7 2 4z" fill="#c4262c" />
        <ellipse cx="27" cy="45" rx="20" ry="10" fill="#e6e6e6" />
        <ellipse cx="27" cy="44" rx="17" ry="8.500" fill="#373737" />
        <path d="M17 49l9-9 3 2 8 7M20 40l14 6" stroke="#ddd" strokeWidth="2.500" fill="none" />
        <path d="M40 55q9-4 8 2-1 6-9 6" fill="none" stroke="#f2d447" strokeWidth="2" />
        <path d="M5 54q20 6 36 0 1 8-6 12H14Q8 62 5 54z" fill="#f2d447" />
        <ellipse cx="26" cy="67" rx="13" ry="3" fill="#e3bb22" />
        <path d="M26 56l3 4-3 4-3-4zM17 57l2 3-2 3-2-3zM35 57l2 3-2 3-2-3z" fill="#b5202b" />
        <path d="M10 70h36l5 9H5z" fill="#d5d5d5" />
        <path d="M5 79h46v3H5z" fill="#777" />
        <path d="M14 83h28l-2 14q-12 5-24 0z" fill="#9d8899" fillOpacity=".55" />
        <ellipse cx="28" cy="97" rx="14" ry="3" fill="#b9adb7" />
      </svg>
    </div>
  );
}

function TopPanel() {
  return (
    <div className="flex h-6 shrink-0 items-center bg-linear-to-b from-[#57554d] to-[#3f3e39] pl-[6px] pr-[8px] text-[#dfdbd2]">
      <span className="whitespace-pre text-[14.4px] font-bold tracking-[0.092px]">Любительский турнир БК Легенда на кубок "Хамовники" 7 тур - Tournament Service - Google Chrome</span>
      <div className="ml-auto flex items-center">
        <svg width="18" height="16" viewBox="0 0 18 16"><path d="M5 0l4 2.800L13 0l5 3.500-3.500 3L18 9.500l-3.300 2.300L9 16l-5.700-4.200L0 9.500l3.500-3L0 3.500z" fill="#dfdbd2" /></svg>
        <svg className="ml-[13px]" width="20" height="14" viewBox="0 0 20 14" fill="none" stroke="#dfdbd2" strokeWidth="1.500"><path d="M1 4.500q9-7 18 0M3.500 7q6.500-5 13 0M6 9.500q4-3 8 0" /><path d="M7.500 11.500h5L10 14z" fill="#dfdbd2" stroke="none" /></svg>
        <span className="ml-[11px] flex h-5 w-5 items-center justify-center rounded-[2px] bg-[#dfdbd2] pt-px text-[12px] leading-none text-[#3c3b37]">En</span>
        <svg className="ml-[11px]" width="9" height="16" viewBox="0 0 9 16" fill="none" stroke="#dfdbd2" strokeWidth="1.300"><path d="M.8 4.200l7 7.300L4.300 15V1l3.500 3.500-7 7.300" /></svg>
        <svg className="ml-[13px]" width="24" height="13" viewBox="0 0 24 13"><rect x=".8" y=".8" width="19.500" height="11" rx="1.500" fill="none" stroke="#dfdbd2" strokeWidth="1.300" /><rect x="21" y="4" width="3" height="5" fill="#dfdbd2" /><path d="M4 4.500l7 1-1-2.500 7 5-7-1 1 3z" fill="#dfdbd2" /></svg>
        <svg className="ml-[11px]" width="20" height="16" viewBox="0 0 20 16"><path d="M0 5.500h3l4-4v13l-4-4H0z" fill="#dfdbd2" /><path d="M9.500 5.500q2 2.500 0 5M12.500 3.500q3.500 4.500 0 9M15.500 1.500q5 6.500 0 13" fill="none" stroke="#dfdbd2" strokeWidth="1.400" /></svg>
        <span className="ml-[13px] w-[38px] pb-px text-[14px] leading-none">23:56</span>
        <svg className="ml-[11px]" width="16" height="16" viewBox="0 0 16 16" fill="none" stroke="#dfdbd2"><circle cx="8" cy="8" r="6.600" strokeWidth="2" strokeDasharray="3 2.180" /><path d="M5.500 4.800a4.300 4.300 0 1 0 5 0M8 1v7" strokeWidth="1.700" /></svg>
      </div>
    </div>
  );
}

export default function App() {
  return (
    <div className="flex h-[768px] w-[1366px] flex-col overflow-hidden bg-white font-['Noto_Sans','Open_Sans',sans-serif]">
      <TopPanel />
      <div className="flex min-h-0 flex-1">
        <Launcher />
        <div className="flex min-w-0 flex-1 flex-col">
          <TabStrip />
          <Toolbar />
          <Bookmarks />
          <Page />
        </div>
      </div>
    </div>
  );
}
